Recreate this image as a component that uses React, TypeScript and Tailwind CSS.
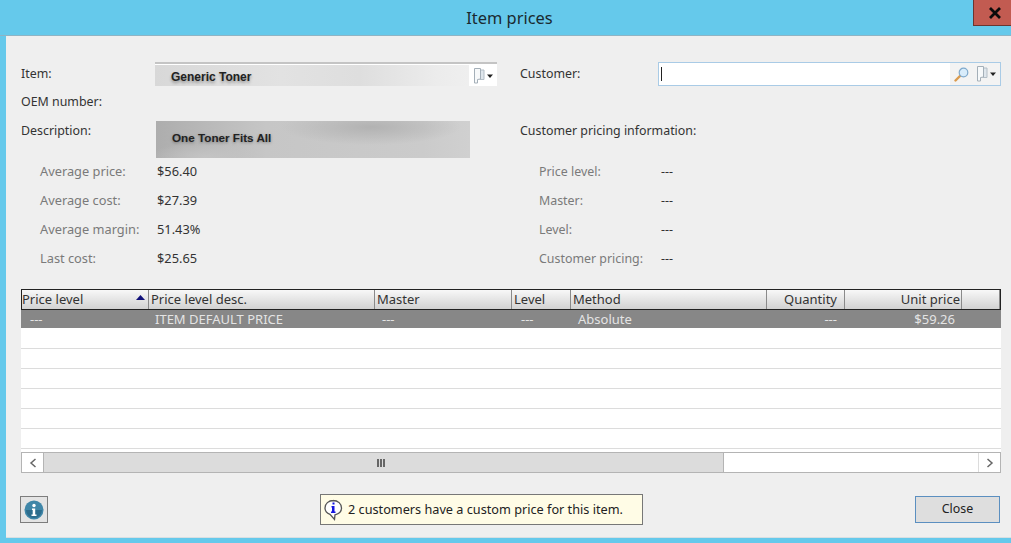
const font = "font-['Noto_Sans','Liberation_Sans',sans-serif]";

const columns = [
  { label: 'Price level', width: 'w-[127px]', cell: '---', cellClass: 'pl-[9px]', sort: true },
  { label: 'Price level desc.', width: 'w-[226px]', cell: 'ITEM DEFAULT PRICE', cellClass: 'pl-[7px]' },
  { label: 'Master', width: 'w-[137px]', cell: '---', cellClass: 'pl-[8px]' },
  { label: 'Level', width: 'w-[59px]', cell: '---', cellClass: 'pl-[10px]' },
  { label: 'Method', width: 'w-[196px]', cell: 'Absolute', cellClass: 'pl-[8px]' },
  { label: 'Quantity', width: 'w-[78px] pr-[7px] text-right', cell: '---', cellClass: 'text-right pr-[7px]' },
  { label: 'Unit price', width: 'w-[117px] pr-[1px] text-right', cell: '$59.26', cellClass: 'text-right pr-[6px]' },
  { label: '', width: 'flex-1', cell: '', cellClass: '' },
];

function FlagIcon() {
  return (
    <svg width="21" height="16" viewBox="0 0 21 16">
      <path d="M7 2h4v9.500H7z" fill="#dfe6ec" stroke="#b4bec6" />
      <path d="M1.500 .5h6v10.500l-3 .5v3.500h-3z" fill="#f7f9fa" stroke="#a4afb8" />
      <path d="M14 6.500h6l-3 3.500z" fill="#222" />
    </svg>
  );
}

function SearchIcon() {
  return (
    <svg width="15" height="15" viewBox="0 0 15 15">
      <path d="M6 9l-4.500 4.500" stroke="#d99a4e" strokeWidth="2.400" strokeLinecap="round" />
      <circle cx="9.500" cy="5.500" r="4.300" fill="#d8ecfb" stroke="#7fa9cc" strokeWidth="1.200" />
    </svg>
  );
}

function Stat({ label, value, labelWidth }: { label: string; value: string; labelWidth: string }) {
  return (
    <div className="flex h-[29px] items-center">
      <span className={`${labelWidth} text-[#7a7a7a]`}>{label}</span>
      <span className="text-[#333]">{value}</span>
    </div>
  );
}

function ScrollButton({ dir }: { dir: 'left' | 'right' }) {
  return (
    <div className="flex w-[21px] items-center justify-center bg-white">
      <svg width="8" height="10" viewBox="0 0 8 10">
        <path d={dir === 'left' ? 'M6.500 1L2 5l4.500 4' : 'M1.500 1L6 5 1.500 9'} fill="none" stroke="#666" strokeWidth="1.500" />
      </svg>
    </div>
  );
}

export default function App() {
  return (
    <div className={`flex h-[543px] w-[1011px] flex-col overflow-hidden bg-[#65c9eb] text-[12.4px] text-[#333] ${font}`}>
      {/* title bar */}
      <div className="relative flex h-[36px] shrink-0 items-center justify-center border-b border-[#8fb4c4] pl-[8px] pt-[2px] text-[16.4px] text-[#1a2a30]">
        Item prices
        <div className="absolute right-0 top-0 flex h-[26px] w-[38px] items-center justify-center border-b border-l border-[#6b3530] bg-[#c25b51] pl-[5px]">
          <svg width="14" height="12" viewBox="0 0 14 12">
            <path d="M2 1l10 10M12 1L2 11" stroke="#0b0b0b" strokeWidth="2.800" />
          </svg>
        </div>
      </div>

      <div className="ml-[6px] flex h-[502px] shrink-0 flex-col border-b border-[#d8dfe2] bg-[#efefef] pl-[15px] pr-[10px] pt-[26px]">
        {/* top form */}
        <div className="flex">
          <div className="w-[476px]">
            <div className="flex h-[24px] items-center">
              <span className="w-[134px]">Item:</span>
              <div className="flex h-[24px] w-[342px] border-t-2 border-[#c4c4c4] bg-white pt-[1px]">
                <div className="flex flex-1 items-center bg-[linear-gradient(90deg,#d8d8d8,#e2e2e2_40%,#dedede_65%,#ececec_90%,#efefef)] pl-[16px] pt-[2px] font-['Liberation_Sans',sans-serif] text-[12px] font-bold text-[#222] [text-shadow:0_2px_3px_rgba(0,0,0,0.35)]">
                  Generic Toner
                </div>
                <div className="flex w-[28px] items-center justify-center">
                  <FlagIcon />
                </div>
              </div>
            </div>
            <div className="flex h-[35px] items-center pb-[2px]">OEM number:</div>
            <div className="flex h-[37px]">
              <span className="w-[135px] pt-[1px]">Description:</span>
              <div className="flex w-[314px] items-center bg-[radial-gradient(ellipse_90px_18px_at_215px_6px,#b2b2b2,transparent),radial-gradient(ellipse_60px_14px_at_50px_36px,#c4c4c4,transparent),linear-gradient(90deg,#adadad,#c6c6c6_35%,#cbcbcb_85%,#d0d0d0)] pb-[3px] pl-[16px] font-['Liberation_Sans',sans-serif] text-[11.7px] font-bold text-[#222] [text-shadow:0_1px_3px_rgba(0,0,0,0.35)]">
                One Toner Fits All
              </div>
            </div>
            <div className="-mt-[1px] pl-[19px] text-[12.8px]">
              <Stat label="Average price:" value="$56.40" labelWidth="w-[117px]" />
              <Stat label="Average cost:" value="$27.39" labelWidth="w-[117px]" />
              <Stat label="Average margin:" value="51.43%" labelWidth="w-[117px]" />
              <Stat label="Last cost:" value="$25.65" labelWidth="w-[117px]" />
            </div>
          </div>

          <div className="ml-[23px] flex-1">
            <div className="flex h-[24px] items-center">
              <span className="w-[138px]">Customer:</span>
              <div className="flex h-[24px] flex-1 items-center border border-[#a9cbe6] bg-white pl-[2px]">
                <div className="h-[14px] w-px bg-[#222]" />
                <div className="ml-auto flex h-full w-[50px] items-center bg-[#f3f3f3] pl-[4px]">
                  <SearchIcon />
                  <div className="ml-[7px]">
                    <FlagIcon />
                  </div>
                </div>
              </div>
            </div>
            <div className="h-[35px]" />
            <div className="h-[37px] pt-[1px]">Customer pricing information:</div>
            <div className="pl-[19px]">
              <Stat label="Price level:" value="---" labelWidth="w-[122px]" />
              <Stat label="Master:" value="---" labelWidth="w-[122px]" />
              <Stat label="Level:" value="---" labelWidth="w-[122px]" />
              <Stat label="Customer pricing:" value="---" labelWidth="w-[122px]" />
            </div>
          </div>
        </div>

        {/* price table */}
        <div className="mt-[15px] flex flex-col bg-white text-[13px]">
          <div className="flex h-[21px] border border-[#222] bg-gradient-to-b from-[#f8f8f8] to-[#d2d2d2] leading-[19px]">
            {columns.map((col, i) => (
              <div
                key={col.label || 'filler'}
                className={`relative ${col.width} border-r border-[#8a8a8a] ${i === 0 ? '' : 'pl-[2px]'}`}
              >
                {col.label}
                {col.sort && (
                  <svg className="absolute right-[3px] top-[5px]" width="9" height="5" viewBox="0 0 9 5">
                    <path d="M4.500 0L9 5H0z" fill="#10107a" />
                  </svg>
                )}
              </div>
            ))}
          </div>
          <div className="flex h-[18px] bg-[#878787] leading-[19px] text-[#e4e4e4]">
            {columns.map((col) => (
              <div key={col.label || 'filler'} className={`${col.width.split(' ')[0]} ${col.cellClass}`}>
                {col.cell}
              </div>
            ))}
          </div>
          {[0, 1, 2, 3, 4, 5].map((row) => (
            <div key={row} className={`border-b border-[#dcdcdc] ${row === 0 ? 'h-[21px]' : 'h-[20px]'}`} />
          ))}
          {/* scrollbar */}
          <div className="mt-[3px] flex h-[21px] border border-[#b4b4b4] bg-white">
            <ScrollButton dir="left" />
            <div className="flex w-[681px] items-center justify-center border-x border-[#b4b4b4] bg-[#dcdcdc]">
              <div className="-ml-[5px] flex gap-[1px]">
                <span className="h-[8px] w-[2px] bg-[#666]" />
                <span className="h-[8px] w-[2px] bg-[#666]" />
                <span className="h-[8px] w-[2px] bg-[#666]" />
              </div>
            </div>
            <div className="flex-1 border-r border-[#dcdcdc]" />
            <ScrollButton dir="right" />
          </div>
        </div>

        {/* footer */}
        <div className="mt-[21px] flex items-start">
          <button className="-ml-[1px] mt-[2px] flex h-[27px] w-[28px] items-center justify-center border border-[#7d7d7d] bg-[#e4e4e4]">
            <svg width="20" height="20" viewBox="0 0 20 20">
              <circle cx="10" cy="10" r="9.500" fill="#3f86a8" />
              <path d="M2 10a8 8 0 0 0 16 0z" fill="#2d6d8d" />
              <circle cx="10" cy="5.500" r="1.700" fill="#fff" />
              <path d="M8 8.500h3.200v6h1.300V16h-5v-1.500h1.200V10H8z" fill="#fff" />
            </svg>
          </button>
          <div className="ml-[272px] flex h-[31px] w-[323px] items-center border border-[#777] bg-[#fffce6] pl-[2px] text-[12.7px] text-[#222]">
            <svg width="21" height="22" viewBox="0 0 21 22">
              <path d="M10.500 1.500c-5 0-8.500 3.200-8.500 7.500 0 3 2 5.300 5 6.400l4.500 5 .5-4.600c3.800-.9 6.500-3.500 6.500-6.800 0-4.300-3.500-7.500-8.500-7.500z" fill="#fff" stroke="#555" strokeWidth="1.300" />
              <rect x="9.500" y="3.500" width="2" height="2" fill="#1414e0" />
              <path d="M8.500 7h3v5.500h1V14h-4.500v-1.500h1V8.500h-.5z" fill="#1414e0" />
            </svg>
            <span className="ml-[4px]">2 customers have a custom price for this item.</span>
          </div>
          <button className="ml-auto mr-[1px] mt-[2px] h-[27px] w-[85px] border border-[#5b8fc0] bg-[#dedede] text-[#222]">
            Close
          </button>
        </div>
      </div>
    </div>
  );
}
